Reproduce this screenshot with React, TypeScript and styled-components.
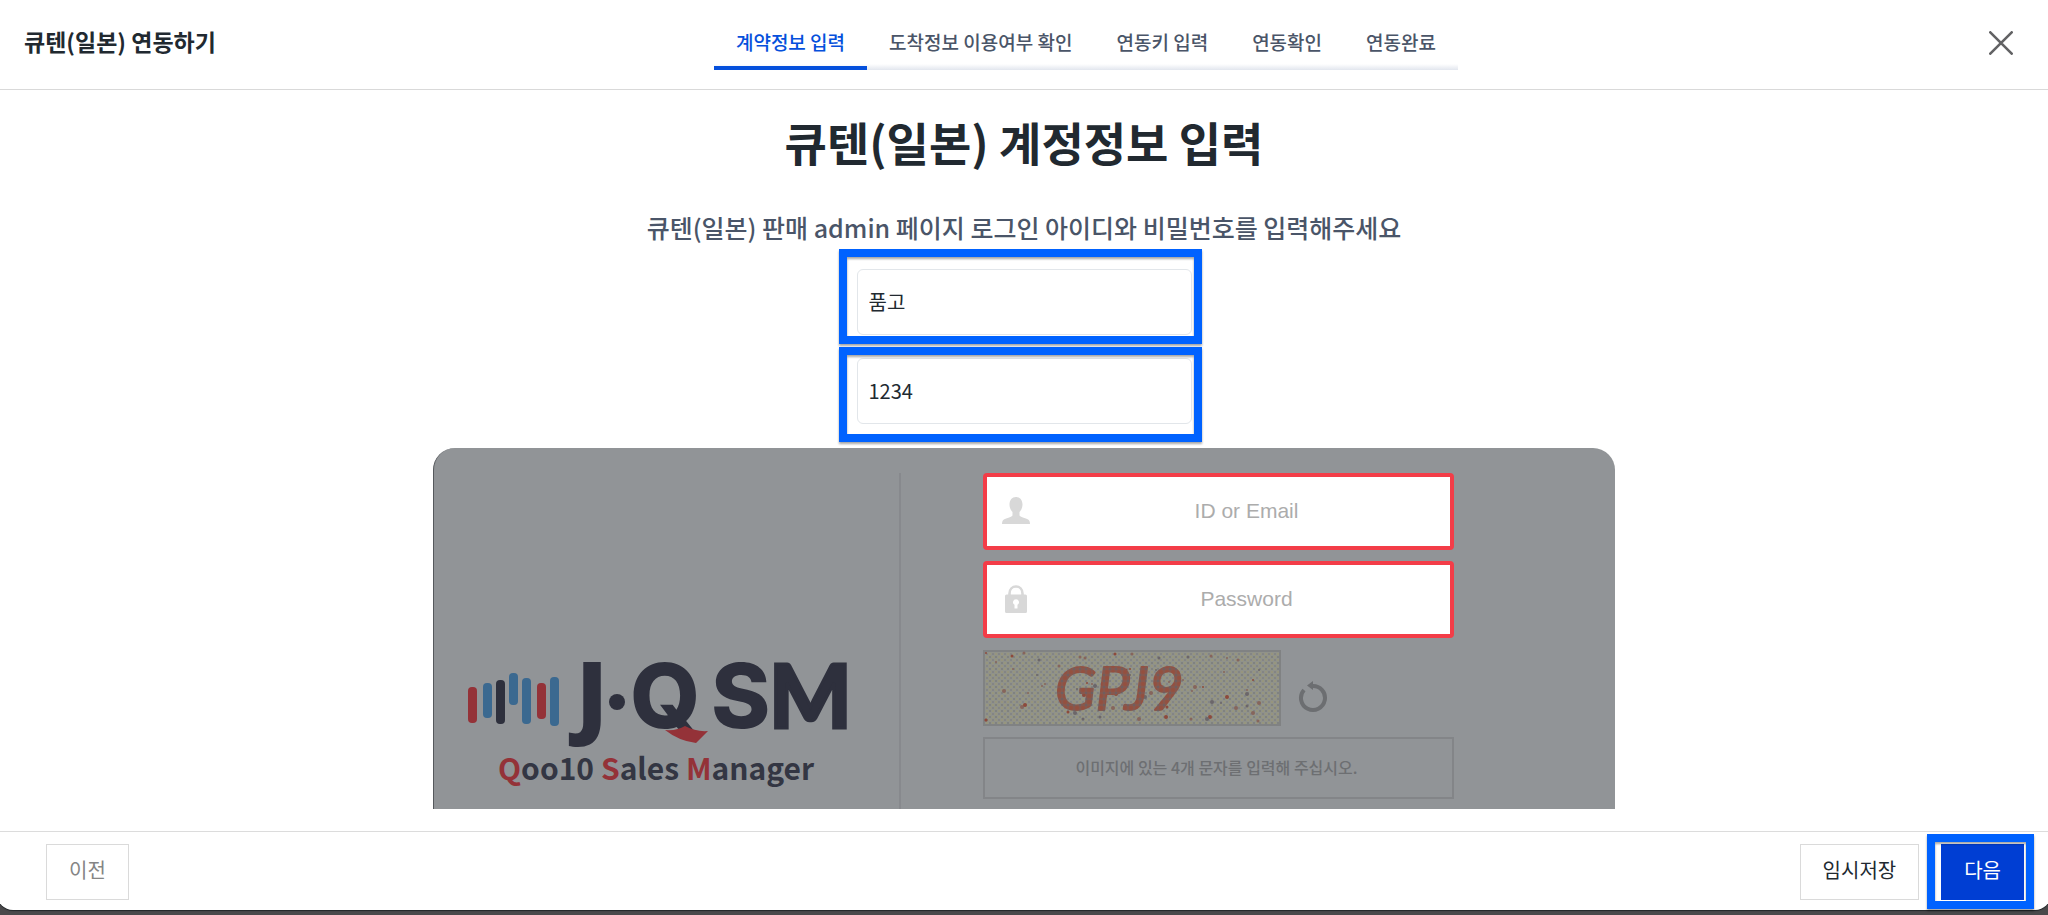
import React from "react";
import styled, { createGlobalStyle } from "styled-components";

const GlobalStyle = createGlobalStyle`
  *, *::before, *::after { box-sizing: border-box; }
  body {
    margin: 0;
    background: #4a494b;
    color: #212930;
    font-family: "Noto Sans CJK KR", sans-serif;
  }
  button, input { font: inherit; color: inherit; }
`;

const Shell = styled.div`
  display: flex;
  flex-direction: column;
  min-height: 100vh;
  padding-bottom: 5px;
  overflow: hidden;
`;

const Dialog = styled.div`
  display: flex;
  flex: 1;
  flex-direction: column;
  margin: 0 -3px;
  padding: 0 3px;
  background: #fff;
  border-radius: 0 0 16px 16px;
  box-shadow: 0 1px 1px #222629;
`;

const Header = styled.header`
  display: flex;
  align-items: flex-start;
  justify-content: space-between;
  height: 90px;
  margin: 0 -3px;
  padding: 16px 5px 0 27px;
  border-bottom: 1px solid #d9d9d9;
`;

const DialogTitle = styled.strong`
  font-size: 23px;
  line-height: 50px;
  font-weight: 700;
  white-space: nowrap;
`;

const Steps = styled.nav`
  display: flex;
  background: linear-gradient(#fff, #e2e6ee) bottom / 100% 6px no-repeat;
`;

const Step = styled.a<{ $active?: boolean }>`
  height: 54px;
  padding: 0 22px;
  border-bottom: 4px solid ${(p) => (p.$active ? "#0550dc" : "transparent")};
  color: ${(p) => (p.$active ? "#0550dc" : "#4a5568")};
  font-size: 19px;
  line-height: 52px;
  font-weight: 500;
  text-decoration: none;
  white-space: nowrap;
`;

const CloseButton = styled.button`
  display: flex;
  align-items: center;
  justify-content: center;
  width: 90px;
  height: 54px;
  padding: 0;
  border: 0;
  background: none;
`;

const Main = styled.main`
  display: flex;
  flex: 1;
  flex-direction: column;
  align-items: center;
  padding: 23px 24px 22px;
`;

const Heading = styled.h1`
  margin: 0 0 42px;
  font-size: 46px;
  line-height: 56px;
  font-weight: 700;
`;

const Guide = styled.p`
  margin: 0 0 26px;
  color: #4a5568;
  font-size: 25px;
  line-height: 32px;
  font-weight: 500;
`;

const Fields = styled.div`
  display: flex;
  flex-direction: column;
  gap: 23px;
  width: 100%;
  max-width: 335px;
  margin-bottom: 24px;
`;

const Highlighted = styled.div`
  position: relative;
`;

const HighlightFrame = styled.span<{ $inset: string }>`
  position: absolute;
  inset: ${(p) => p.$inset};
  border: 8px solid #0062ff;
  filter: drop-shadow(0 2px 1px rgba(0, 0, 0, 0.35));
  pointer-events: none;
`;

const TextField = styled.input`
  display: block;
  width: 100%;
  height: 66px;
  padding: 0 12px 2px 11px;
  border: 1px solid #e2e6ea;
  border-radius: 6px;
  background: #fff;
  font-size: 20px;
`;

const Preview = styled.section`
  display: grid;
  flex: 1;
  grid-template-columns: 467px minmax(0, 1fr);
  width: 100%;
  max-width: 1182px;
  padding-top: 25px;
  border-left: 1px solid #55585c;
  border-radius: 22px 22px 0 0;
  background: #919497;
`;

const Brand = styled.div`
  display: flex;
  align-items: flex-end;
  padding: 0 0 17px 32px;
  border-right: 2px solid #87898d;
`;

const LoginForm = styled.div`
  display: flex;
  flex-direction: column;
  gap: 11px;
  padding: 0 161px 10px 82px;
`;

const LoginField = styled.label`
  display: flex;
  align-items: center;
  gap: 13px;
  height: 77px;
  padding: 0 0 2px 15px;
  border: 4px solid #f33d48;
  border-radius: 4px;
  background: #fff;
`;

const LoginInput = styled.input`
  flex: 1;
  min-width: 0;
  padding: 0;
  border: 0;
  background: none;
  font-family: "Liberation Sans", sans-serif;
  font-size: 21px;
  text-align: center;
  &::placeholder { color: #acacac; opacity: 1; }
`;

const CaptchaRow = styled.div`
  display: flex;
  align-items: center;
  gap: 16px;
  height: 77px;
  padding-top: 1px;
`;

const RefreshButton = styled.button`
  display: flex;
  padding: 18px 0 0;
  border: 0;
  background: none;
`;

const CaptchaInput = styled.input`
  width: 100%;
  height: 62px;
  padding: 0 4px 3px 0;
  border: 2px solid #838588;
  background: none;
  font-size: 16px;
  font-weight: 500;
  text-align: center;
  &::placeholder { color: #6d6f72; opacity: 1; }
`;

const Footer = styled.footer`
  display: flex;
  align-items: center;
  justify-content: space-between;
  height: 79px;
  margin: 0 -3px;
  padding: 1px 27px 0 49px;
  border-top: 1px solid #dcdcdc;
`;

const Actions = styled.div`
  display: flex;
  gap: 22px;
`;

const ActionButton = styled.button<{ $tone?: "muted" | "primary" }>`
  display: block;
  height: 56px;
  padding: 0 22px 4px;
  border: 1px solid ${(p) => (p.$tone === "primary" ? "#003ed3" : "#dadada")};
  background: ${(p) => (p.$tone === "primary" ? "#003ed3" : "#fff")};
  color: ${(p) =>
    p.$tone === "primary" ? "#fff" : p.$tone === "muted" ? "#858585" : "#212930"};
  font-size: 20px;
`;

const steps = ["계약정보 입력", "도착정보 이용여부 확인", "연동키 입력", "연동확인", "연동완료"];

const logoBars = [
  { x: 6, top: 27, bottom: 63, color: "#943238" },
  { x: 21, top: 23, bottom: 58, color: "#3b6990" },
  { x: 34, top: 20, bottom: 64, color: "#2e303d" },
  { x: 47, top: 13, bottom: 45, color: "#3b6990" },
  { x: 60, top: 18, bottom: 64, color: "#3b6990" },
  { x: 75, top: 23, bottom: 59, color: "#943238" },
  { x: 88, top: 17, bottom: 66, color: "#3b6990" },
];

function Logo() {
  return (
    <svg width="390" height="182" viewBox="0 -50 390 182" role="img" aria-label="J·QSM Qoo10 Sales Manager">
      {logoBars.map((b) => (
        <rect key={b.x} x={b.x - 4} y={b.top} width="9" height={b.bottom - b.top} rx="4" fill={b.color} />
      ))}
      <g fill="#2e303d" fontFamily="Inter, sans-serif" fontWeight="800" fontSize="90">
        <text x="110" y="67" fontFamily="Open Sans, sans-serif">J</text>
        <circle cx="151" cy="42" r="8" />
        <text x="164" y="68">Q</text>
        <text x="245" y="68">S</text>
        <text x="303" y="68" fontFamily="Lato, sans-serif" fontWeight="900" fontSize="87" stroke="#2e303d" strokeWidth="3">M</text>
      </g>
      <path d="M199 70Q211 71 219 66Q230 72 242 71L230 83Q213 81 199 70Z" fill="#943238" />
      <text x="32" y="120" fill="#333643" fontFamily="Noto Sans CJK KR, sans-serif" fontWeight="700" fontSize="30">
        <tspan fill="#943238">Q</tspan>oo10 <tspan fill="#943238">S</tspan>ales <tspan fill="#943238">M</tspan>anager
      </text>
    </svg>
  );
}

const specks = Array.from({ length: 70 }, (_, i) => ({
  x: (i * 83 + ((i * i * 31) % 57)) % 290,
  y: (i * 47 + ((i * i * 17) % 29)) % 70,
  r: 1 + (i % 3) / 2,
  color: i % 4 === 0 ? "#8d4a3c" : i % 4 === 1 ? "#6b666a" : "#86655c",
}));

function Captcha() {
  return (
    <svg width="298" height="76" viewBox="0 0 298 76" role="img" aria-label="GPJ9">
      <defs>
        <pattern id="paper" width="6" height="6" patternUnits="userSpaceOnUse">
          <rect width="6" height="6" fill="#90928a" />
          <circle cx="1" cy="1" r="1" fill="#7b7c7c" />
          <circle cx="4" cy="4" r="1" fill="#808183" />
          <circle cx="4" cy="1" r="1" fill="#9a9778" />
          <circle cx="1" cy="4" r="1" fill="#999678" />
        </pattern>
        <pattern id="ink" width="6" height="6" patternUnits="userSpaceOnUse">
          <rect width="6" height="6" fill="#86584e" />
          <circle cx="1" cy="1" r="1" fill="#676064" />
          <circle cx="4" cy="4" r="2" fill="#94503f" />
        </pattern>
      </defs>
      <rect x="1" y="1" width="296" height="74" fill="url(#paper)" stroke="#808283" strokeWidth="2" />
      {specks.map((s, i) => (
        <circle key={i} cx={s.x + 3} cy={s.y + 3} r={s.r} fill={s.color} />
      ))}
      <text
        x="72"
        y="60"
        fill="url(#ink)"
        stroke="url(#ink)"
        strokeWidth="2"
        strokeLinejoin="round"
        fontFamily="Lato, sans-serif"
        fontStyle="italic"
        fontSize="60"
      >
        GPJ9
      </text>
    </svg>
  );
}

export default function App() {
  return (
    <>
      <GlobalStyle />
      <Shell>
        <Dialog role="dialog" aria-labelledby="dialog-title">
          <Header>
            <DialogTitle id="dialog-title">큐텐(일본) 연동하기</DialogTitle>
            <Steps aria-label="연동 단계">
              {steps.map((label, i) => (
                <Step key={label} href="#" $active={i === 0} aria-current={i === 0 ? "step" : undefined}>
                  {label}
                </Step>
              ))}
            </Steps>
            <CloseButton type="button" aria-label="닫기">
              <svg width="24" height="24" viewBox="0 0 24 24" stroke="#626264" strokeWidth="2.6" strokeLinecap="round">
                <path d="M1.300 1.300 22.700 22.700M22.700 1.300 1.300 22.700" />
              </svg>
            </CloseButton>
          </Header>

          <Main>
            <Heading>큐텐(일본) 계정정보 입력</Heading>
            <Guide>큐텐(일본) 판매 admin 페이지 로그인 아이디와 비밀번호를 입력해주세요</Guide>
            <Fields>
              <Highlighted>
                <TextField aria-label="아이디" defaultValue="품고" />
                <HighlightFrame $inset="-20px -10px -9px -18px" />
              </Highlighted>
              <Highlighted>
                <TextField aria-label="비밀번호" defaultValue="1234" />
                <HighlightFrame $inset="-11px -10px -18px -18px" />
              </Highlighted>
            </Fields>

            <Preview>
              <Brand>
                <Logo />
              </Brand>
              <LoginForm>
                <LoginField>
                  <svg width="28" height="28" viewBox="0 0 28 28" fill="#d8d8d8" aria-hidden="true">
                    <path d="M14 0c4 0 6.500 3 6.500 7.500 0 3.500-1.500 6-3 7.500v3.500c1 1.500 4 2.200 7 3.200 2.500.9 3.500 2.300 3.500 5.300H0c0-3 1-4.400 3.500-5.300 3-1 6-1.700 7-3.200V15c-1.500-1.500-3-4-3-7.500C7.500 3 10 0 14 0Z" />
                  </svg>
                  <LoginInput placeholder="ID or Email" aria-label="ID or Email" />
                </LoginField>
                <LoginField>
                  <svg width="28" height="28" viewBox="0 0 28 28" aria-hidden="true">
                    <path d="M7.500 11V8.500C7.500 4 10.500 1.500 14 1.500S20.500 4 20.500 8.500V11" fill="none" stroke="#d8d8d8" strokeWidth="2.600" />
                    <path fillRule="evenodd" fill="#d8d8d8" d="M4.500 9.500h19a1.500 1.500 0 0 1 1.500 1.500v15.500a1.500 1.500 0 0 1-1.500 1.500h-19A1.500 1.500 0 0 1 3 26.500V11a1.500 1.500 0 0 1 1.500-1.500ZM14 14.200a3 3 0 0 0-1.500 5.600v3.700h3v-3.700a3 3 0 0 0-1.500-5.600Z" />
                  </svg>
                  <LoginInput placeholder="Password" aria-label="Password" />
                </LoginField>
                <CaptchaRow>
                  <Captcha />
                  <RefreshButton type="button" aria-label="새로고침">
                    <svg width="32" height="32" viewBox="0 0 32 32" aria-hidden="true">
                      <path d="M15 5a12 12 0 1 1-8 4" fill="none" stroke="#6c6e71" strokeWidth="4" />
                      <path d="M10 4.500 16 0v9Z" fill="#6c6e71" />
                    </svg>
                  </RefreshButton>
                </CaptchaRow>
                <CaptchaInput
                  placeholder="이미지에 있는 4개 문자를 입력해 주십시오."
                  aria-label="이미지에 있는 4개 문자"
                />
              </LoginForm>
            </Preview>
          </Main>

          <Footer>
            <ActionButton type="button" $tone="muted">이전</ActionButton>
            <Actions>
              <ActionButton type="button">임시저장</ActionButton>
              <Highlighted>
                <ActionButton type="button" $tone="primary">다음</ActionButton>
                <HighlightFrame $inset="-10px -10px -9px -14px" />
              </Highlighted>
            </Actions>
          </Footer>
        </Dialog>
      </Shell>
    </>
  );
}
